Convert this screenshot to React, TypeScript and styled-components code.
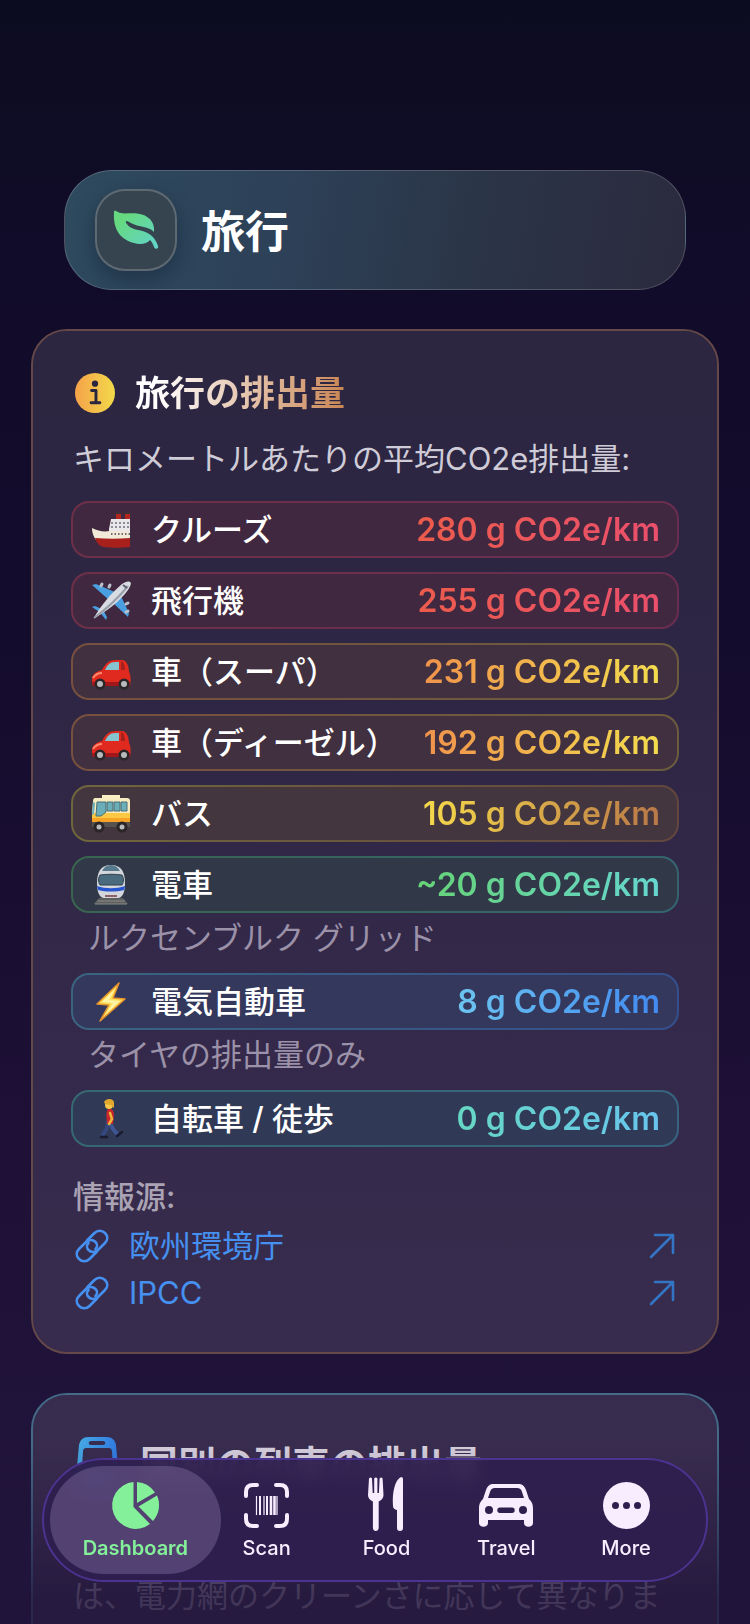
import React from "react";
import styled, {createGlobalStyle, css} from "styled-components";

const GlobalStyle = createGlobalStyle`
    * {
        box-sizing: border-box;
    }

    body {
        margin: 0;
        background: #0c0c20;
        font-family: Inter, "Noto Sans CJK JP", sans-serif;
        color: #fff;
    }
`;

const Screen = styled.div`
    height: 100vh;
    overflow: hidden;
    background: linear-gradient(180deg, #0c0c20 0%, #110c29 15%, #140c2d 40%, #1e1036 70%, #22163c 100%);
`;

const Content = styled.main`
    display: flex;
    flex-direction: column;
    gap: 39px;
    padding: 170px 31px 0;
`;

const Header = styled.header`
    display: flex;
    align-items: center;
    gap: 24px;
    height: 120px;
    margin: 0 33px;
    padding: 0 30px;
    border: 1px solid rgba(255, 255, 255, 0.18);
    border-radius: 48px;
    background: linear-gradient(100deg, #2e4a5e 0%, #2d4158 35%, #2b3548 65%, #2b2a3e 100%);
`;

const HeaderBadge = styled.div`
    display: flex;
    align-items: center;
    justify-content: center;
    width: 82px;
    height: 82px;
    border: 2px solid rgba(255, 255, 255, 0.2);
    border-radius: 30px;
    background: #36444f;
    box-shadow: 0 8px 20px rgba(10, 20, 40, 0.35);
`;

const PageTitle = styled.h1`
    margin: 0;
    padding-top: 4px;
    font-size: 44px;
    line-height: 60px;
    font-weight: 700;
`;

const Card = styled.section<{ $edge: string }>`
    padding: 40px 38px 36px;
    border: 2px solid ${({$edge}) => $edge};
    border-radius: 36px;
    background: rgba(255, 255, 255, 0.11) padding-box;
`;

const CardHead = styled.div<{ $large?: boolean }>`
    display: flex;
    align-items: center;
    gap: ${({$large}) => ($large ? 22 : 20)}px;
    padding: ${({$large}) => ($large ? "2px 6px 0" : "0 4px")};
`;

const CardTitle = styled.h2<{ $large?: boolean }>`
    margin: 0;
    font-size: ${({$large}) => ($large ? 38 : 35)}px;
    line-height: 44px;
    font-weight: 700;
    ${({$large}) => $large ? css`
        color: #d6cfdd;
    ` : css`
        background: linear-gradient(90deg, #fff 10%, #c98554 100%);
        background-clip: text;
        color: transparent;
    `}
`;

const Intro = styled.p`
    margin: 22px 0 20px;
    padding-left: 2px;
    font-size: 31px;
    line-height: 44px;
    color: #cfccd8;
`;

const List = styled.ul`
    display: flex;
    flex-direction: column;
    gap: 14px;
    margin: 0;
    padding: 0;
    list-style: none;
`;

const Row = styled.div<{ $fill: string; $from: string; $to: string }>`
    display: flex;
    align-items: center;
    height: 57px;
    padding: 0 17px 0 18px;
    border: 2px solid transparent;
    border-radius: 18px;
    background: linear-gradient(${({$fill}) => $fill}, ${({$fill}) => $fill}) padding-box,
        linear-gradient(100deg, ${({$from}) => $from}, ${({$to}) => $to}) border-box;
`;

const RowLabel = styled.span`
    flex: 1;
    margin-left: 20px;
    font-size: 31px;
    line-height: 44px;
    font-weight: 500;
    white-space: nowrap;
`;

const RowValue = styled.span<{ $from: string; $to: string }>`
    font-size: 32px;
    line-height: 44px;
    font-weight: 600;
    white-space: nowrap;
    background: linear-gradient(90deg, ${({$from}) => $from}, ${({$to}) => $to});
    background-clip: text;
    color: transparent;
`;

const Note = styled.p`
    margin: 0;
    padding: 3px 17px 0;
    height: 46px;
    font-size: 31px;
    line-height: 44px;
    color: #9b91a8;
`;

const SourcesTitle = styled.h3`
    margin: 25px 0 0;
    padding-left: 2px;
    font-size: 31px;
    line-height: 50px;
    font-weight: 500;
    color: #aaa3b3;
`;

const SourceLink = styled.a`
    display: flex;
    align-items: center;
    gap: 20px;
    height: 47px;
    padding: 0 4px;
    font-size: 31px;
    line-height: 44px;
    color: #4590f0;
    text-decoration: none;

    span {
        flex: 1;
    }
`;

const Paragraph = styled.p`
    margin: 83px 0 0;
    padding-left: 2px;
    font-size: 31px;
    line-height: 44px;
    white-space: nowrap;
    color: #a298ae;
`;

const BottomFade = styled.div`
    position: fixed;
    inset: auto 0 0;
    height: 180px;
    background: linear-gradient(180deg, rgba(32, 20, 58, 0), rgba(32, 20, 58, 0.75) 85%);
`;

const TabBar = styled.nav`
    position: fixed;
    left: 42px;
    right: 42px;
    bottom: 42px;
    display: flex;
    align-items: center;
    height: 124px;
    padding: 0 20px 0 6px;
    border: 2px solid #4b3390;
    border-radius: 62px;
    background: rgba(46, 30, 78, 0.92);
    backdrop-filter: blur(8px);
`;

const Tab = styled.button<{ $active?: boolean }>`
    display: flex;
    flex: ${({$active}) => ($active ? 171 : 120)} 1 0;
    flex-direction: column;
    align-items: center;
    gap: 5px;
    height: 108px;
    margin-right: ${({$active}) => ($active ? -14 : 0)}px;
    padding: 16px 0 0;
    border: none;
    border-radius: 54px;
    background: ${({$active}) => ($active ? "rgba(128, 108, 160, 0.45)" : "none")};
    color: ${({$active}) => ($active ? "#84f09a" : "#f7edff")};
    font-family: inherit;
    font-size: 20px;
    line-height: 28px;
    font-weight: ${({$active}) => ($active ? 600 : 500)};
    cursor: pointer;

    svg {
        overflow: visible;
    }
`;

const LeafIcon = () => (
    <svg width="46" height="40" viewBox="0 0 46 40" fill="none" aria-hidden="true">
        <defs>
            <linearGradient id="leaf" x1="0" y1="0" x2="1" y2="1">
                <stop offset="0.2" stopColor="#66d980" />
                <stop offset="1" stopColor="#62d4cc" />
            </linearGradient>
        </defs>
        <path
            d="M1 2C1 0 3 .5 4 1.500C9 5 16 2.500 24 3.500C36 5 42 12 41 22C36 17 30 17 24 15.500C19 14 16 11.500 14 11C12.500 11 12.500 12.500 13.500 13.500C18 20 25 19.500 31 21.500C38 24 43 29 45 36C46 39 42 40 41 37C40 34 39 32 37 30C34 34 27 35 21 33C6 29 0 18 1 2Z"
            fill="url(#leaf)"
        />
    </svg>
);

const InfoIcon = () => (
    <svg width="40" height="40" viewBox="0 0 41 41" aria-hidden="true">
        <defs>
            <linearGradient id="info" x1="0" y1="0" x2="1" y2="0">
                <stop offset="0" stopColor="#f5a24a" />
                <stop offset="1" stopColor="#f3d94a" />
            </linearGradient>
        </defs>
        <circle cx="20.500" cy="20.500" r="20.500" fill="url(#info)" />
        <circle cx="20.500" cy="11" r="3.200" fill="#2b2640" />
        <path d="M17 18h4.500v12.500M16.500 30.500h9" stroke="#2b2640" strokeWidth="3" strokeLinecap="round" strokeLinejoin="round" fill="none" />
    </svg>
);

const ShipIcon = () => (
    <svg width="40" height="40" viewBox="0 0 40 40" aria-hidden="true">
        <path d="M25 2h5v9h-5zM34 2h5v9h-5z" fill="#b3261e" />
        <path d="M25 2h5v2h-5zM34 2h5v2h-5z" fill="#3a3238" />
        <path d="M20 9h19v16H18v-6z" fill="#e9e7ea" />
        <path d="M20 13h19M20 17h19" stroke="#6f7480" strokeWidth="1.500" strokeDasharray="2 2" />
        <path d="M1 18c6 3 11 4 18 3h20v9H5C2 26 1 22 1 18z" fill="#f2ead9" />
        <path d="M20 24h19" stroke="#4a4350" strokeWidth="1.500" strokeDasharray="1.500 2" />
        <path d="M4 28c12 1 24 1 35 0v9c-8 1-18 1-26 0-5-1-7-4-9-9z" fill="#a8201c" />
    </svg>
);

const PlaneIcon = () => (
    <svg width="40" height="40" viewBox="0 0 40 40" aria-hidden="true">
        <path d="M1 4l4-1 21 9-8 7zM37 36l1-4-9-19-8 8zM1 26l3-1 9 4-3 3zM15 39l1-3-5-9-3 3z" fill="#4a9fe0" />
        <path d="M10 5l1-2M18 6l1-2M35 23l2-1M35 31l2-1" stroke="#b9c2cc" strokeWidth="3" strokeLinecap="round" />
        <path d="M3 37C8 27 20 12 31 3c3-2 6-3 8-2s0 5-2 8C29 20 14 32 3 37z" fill="#d9dbe2" />
        <path d="M3 37C14 29 28 16 37 5" stroke="#999faa" strokeWidth="2" fill="none" />
        <path d="M32 4l4 3" stroke="#5a6270" strokeWidth="2" />
    </svg>
);

const CarIcon = () => (
    <svg width="40" height="40" viewBox="0 0 40 40" aria-hidden="true">
        <path d="M1 27c0-5 5-8 10-9 4-7 7-10 14-10h6c5 0 7 7 7 12 2 3 2 9 1 14H3c-2-1-2-5-2-7z" fill="#e0291f" />
        <path d="M14 18c2-5 5-8 10-8h4v8z" fill="#86c4cf" />
        <path d="M30 9c3 1 4 5 4 9h-4z" fill="#a3221c" />
        <path d="M2 26c2-3 5-5 9-5" stroke="#ff8a6b" strokeWidth="2" fill="none" />
        <path d="M1 30h38v4H2z" fill="#a3161a" />
        <circle cx="9" cy="32" r="5.500" fill="#2a2526" />
        <circle cx="33" cy="32" r="5.500" fill="#2a2526" />
        <circle cx="9" cy="32" r="3" fill="#b8babd" />
        <circle cx="33" cy="32" r="3" fill="#b8babd" />
    </svg>
);

const BusIcon = () => (
    <svg width="40" height="40" viewBox="0 0 40 40" aria-hidden="true">
        <path d="M11 1h18v4H11z" fill="#fbf0c4" />
        <path d="M4 4h32c2 0 3 1 3 3v25H1V19L2 7c0-2 1-3 2-3z" fill="#f7ecc0" />
        <path d="M1 22h38v10H1z" fill="#f7a325" />
        <path d="M1 19h38v5H1z" fill="#fbc844" />
        <path d="M6 8h9v10l-5 4H5zM16 8h6v9h-6zM23 8h6v9h-6zM30 8h6v9h-6z" fill="#69aeb8" stroke="#4b6f78" />
        <path d="M2 8l2 1-1 11-2 1z" fill="#69aeb8" />
        <path d="M1 28h38v5H1z" fill="#565250" />
        <circle cx="8" cy="33" r="5.500" fill="#2a2526" />
        <circle cx="31" cy="33" r="5.500" fill="#2a2526" />
        <circle cx="8" cy="33" r="2.500" fill="#b8babd" />
        <circle cx="31" cy="33" r="2.500" fill="#b8babd" />
    </svg>
);

const TrainIcon = () => (
    <svg width="40" height="40" viewBox="0 0 40 40" aria-hidden="true">
        <path d="M8 33h24l5 6H3z" fill="#5d5f5e" />
        <path d="M6 36h28M4 39h32" stroke="#8b8d89" strokeWidth="1" />
        <path d="M20 0c11 0 14 8 14 18 0 8-2 15-7 15H13C8 33 6 26 6 18 6 8 9 0 20 0z" fill="#d3d6dc" />
        <path d="M11 6c2-4 5-6 9-6s7 2 9 6z" fill="#56798c" />
        <path d="M9 10c7-1 15-1 22 0 2 3 2 7 0 10H9c-2-3-2-7 0-10z" fill="#496b7d" stroke="#33424e" />
        <path d="M6 21c9 3 19 3 28 0l-1 4c-8 2-18 2-26 0z" fill="#2656cf" />
        <path d="M14 31h12" stroke="#8a6268" strokeWidth="2" />
    </svg>
);

const BoltIcon = () => (
    <svg width="40" height="40" viewBox="0 0 40 40" aria-hidden="true">
        <path d="M28 1L6 22l12 1L9 39l25-22-12-1z" fill="#ffdf5c" stroke="#e8942c" strokeWidth="1.500" strokeLinejoin="round" />
        <path d="M24 7L11 20l11 1-8 12 15-14-11-1z" fill="#fff3a6" />
    </svg>
);

const WalkerIcon = () => (
    <svg width="40" height="40" viewBox="0 0 40 40" aria-hidden="true">
        <path d="M17 21l-1 8-5 8" stroke="#35477f" strokeWidth="4" fill="none" />
        <path d="M18 22l4 8 5 6" stroke="#405694" strokeWidth="4" fill="none" />
        <path d="M10 38h6M26 37l5-4" stroke="#1a1b30" strokeWidth="2.500" strokeLinecap="round" />
        <path d="M17 10c4-1 6 2 6 6l-1 9h-6c0-5-2-11 1-15z" fill="#c8262b" />
        <path d="M19 14l2 6-3 5" stroke="#eeb43c" strokeWidth="2.500" fill="none" strokeLinecap="round" />
        <circle cx="18" cy="6" r="4" fill="#f7c84a" />
        <path d="M13 3c2-4 9-4 10 0v6l-3-3-6-1z" fill="#e0a92e" />
    </svg>
);

const LinkIcon = () => (
    <svg width="34" height="34" viewBox="0 0 34 34" fill="none" stroke="currentColor" strokeWidth="2.600" strokeLinecap="round" aria-hidden="true">
        <path d="M12 11.500L19.500 4C22.500 1 27 1 30 4C33 7 33 11 30 14L23 21C20 23.500 16 23.500 13.500 21C11.500 19 11.500 16 13.500 14" />
        <path d="M22 22.500L14.500 30C11.500 33 7 33 4 30C1 27 1 23 4 20L11 13C14 10.500 18 10.500 20.500 13C22.500 15 22.500 18 20.500 20" />
    </svg>
);

const ArrowIcon = () => (
    <svg width="26" height="26" viewBox="0 0 26 26" fill="none" stroke="#3474c4" strokeWidth="2.600" strokeLinecap="round" strokeLinejoin="round" aria-hidden="true">
        <path d="M2 24L24 2M6 2h18v18" />
    </svg>
);

const TramIcon = () => (
    <svg width="41" height="54" viewBox="0 0 41 54" aria-hidden="true">
        <defs>
            <linearGradient id="tram" x1="0" y1="0" x2="1" y2="0">
                <stop offset="0" stopColor="#46aae4" />
                <stop offset="1" stopColor="#317ae0" />
            </linearGradient>
        </defs>
        <path
            fillRule="evenodd"
            d="M11 0h19c5 0 8 3 9 8l2 22v16c0 5-3 8-8 8H8c-5 0-8-3-8-8V30L2 8c1-5 4-8 9-8zM14 4c-3 0-3 4 0 4h12c3 0 3-4 0-4zM10 11c-3 0-4 1-4 4L5 30h31l-1-15c0-3-1-4-4-4z"
            fill="url(#tram)"
        />
    </svg>
);

const PieIcon = () => (
    <svg width="47" height="47" viewBox="0 0 47 47" fill="currentColor" aria-hidden="true">
        <path d="M21.500 0A23.500 23.500 0 1 0 38 42L21.500 25z" />
        <path d="M25 0A23.500 23.500 0 0 1 43 10.500L25 21z" />
        <path d="M45 13.500A23.500 23.500 0 0 1 41 39L26.500 24.500z" />
    </svg>
);

const ScanIcon = () => (
    <svg width="47" height="47" viewBox="0 0 47 47" fill="none" stroke="currentColor" aria-hidden="true">
        <path d="M3 14V10Q3 3 10 3H14M33 3H37Q44 3 44 10V14M44 33V37Q44 44 37 44H33M14 44H10Q3 44 3 37V33" strokeWidth="4" strokeLinecap="round" />
        <path d="M13.500 14v19M21 14v19M34 14v19" strokeWidth="1.200" />
        <path d="M17 14v19M24 14v19" strokeWidth="2" />
        <path d="M28 14v19M31.500 14v19" strokeWidth="2.600" />
    </svg>
);

const FoodIcon = () => (
    <svg width="36" height="47" viewBox="0 0 36 47" fill="currentColor" aria-hidden="true">
        <path d="M1-3.500q1.500-2 3 0L4.700 11h1.500V-3.500q1.600-2 3.200 0V11h1.500l.7-14.500q1.500-2 3 0L15.500 13q0 4-4.800 6.500V46q-.4 3-2.900 3t-2.900-3V19.500Q0 17 0 13z" />
        <path d="M33-5q2 0 2 2v49q0 3-3 3t-3-3V28q-4-1-4-4C24 10 27-2 33-5z" />
    </svg>
);

const TravelIcon = () => (
    <svg width="54" height="47" viewBox="0 0 54 47" fill="currentColor" aria-hidden="true">
        <path
            fillRule="evenodd"
            d="M15 2H39C43 2 45 3 47 8L50 17C53 20 54 22 54 27V41C54 46 45 46 45 41V38H9V41C9 46 0 46 0 41V27C0 22 1 20 4 17L7 8C9 3 11 2 15 2zM16 6C13 6 12 7 11 10L9 16H45L43 10C42 7 41 6 38 6zM10 24a4 4 0 1 0 0 8 4 4 0 0 0 0-8zM44 24a4 4 0 1 0 0 8 4 4 0 0 0 0-8zM21 25.500a2.700 2.700 0 0 0 0 5.400h12a2.700 2.700 0 0 0 0-5.400z"
        />
    </svg>
);

const MoreIcon = () => (
    <svg width="47" height="47" viewBox="0 0 47 47" aria-hidden="true">
        <circle cx="23.500" cy="23.500" r="23.500" fill="currentColor" />
        <circle cx="12.500" cy="23.500" r="3.500" fill="#2e1e4e" />
        <circle cx="23.500" cy="23.500" r="3.500" fill="#2e1e4e" />
        <circle cx="34.500" cy="23.500" r="3.500" fill="#2e1e4e" />
    </svg>
);

interface Tone {
    from: string;
    to: string;
    fill: string;
    edgeFrom: string;
    edgeTo: string;
}

const tones: Record<string, Tone> = {
    red: {from: "#ec5c4c", to: "#ea4f6c", fill: "#402840", edgeFrom: "#6e3048", edgeTo: "#6a2d50"},
    orange: {from: "#f0934c", to: "#f3dc4e", fill: "#413040", edgeFrom: "#78503f", edgeTo: "#6c5c3e"},
    yellow: {from: "#f6da4a", to: "#b97748", fill: "#43363e", edgeFrom: "#70663c", edgeTo: "#62463f"},
    green: {from: "#66d475", to: "#66d6cf", fill: "#313848", edgeFrom: "#39654f", edgeTo: "#34656f"},
    blue: {from: "#6cc4f0", to: "#428af0", fill: "#33385c", edgeFrom: "#3a6480", edgeTo: "#344f8c"},
    teal: {from: "#66d8c4", to: "#68c4ee", fill: "#303a56", edgeFrom: "#356870", edgeTo: "#376480"},
};

interface Emission {
    label: string;
    value: string;
    tone: string;
    icon: React.ReactNode;
    note?: string;
}

const emissions: Emission[] = [
    {label: "クルーズ", value: "280 g CO2e/km", tone: "red", icon: <ShipIcon />},
    {label: "飛行機", value: "255 g CO2e/km", tone: "red", icon: <PlaneIcon />},
    {label: "車（スーパ）", value: "231 g CO2e/km", tone: "orange", icon: <CarIcon />},
    {label: "車（ディーゼル）", value: "192 g CO2e/km", tone: "orange", icon: <CarIcon />},
    {label: "バス", value: "105 g CO2e/km", tone: "yellow", icon: <BusIcon />},
    {label: "電車", value: "~20 g CO2e/km", tone: "green", icon: <TrainIcon />, note: "ルクセンブルク グリッド"},
    {label: "電気自動車", value: "8 g CO2e/km", tone: "blue", icon: <BoltIcon />, note: "タイヤの排出量のみ"},
    {label: "自転車 / 徒歩", value: "0 g CO2e/km", tone: "teal", icon: <WalkerIcon />},
];

const tabs = [
    {label: "Dashboard", icon: <PieIcon />},
    {label: "Scan", icon: <ScanIcon />},
    {label: "Food", icon: <FoodIcon />},
    {label: "Travel", icon: <TravelIcon />},
    {label: "More", icon: <MoreIcon />},
];

const EmissionRow: React.FC<{ item: Emission }> = ({item}) => {
    const tone = tones[item.tone];
    return (
        <li>
            <Row $fill={tone.fill} $from={tone.edgeFrom} $to={tone.edgeTo}>
                {item.icon}
                <RowLabel>{item.label}</RowLabel>
                <RowValue $from={tone.from} $to={tone.to}>{item.value}</RowValue>
            </Row>
            {item.note && <Note>{item.note}</Note>}
        </li>
    );
};

const App: React.FC = () => {
    const [activeTab, setActiveTab] = React.useState("Dashboard");

    return (
        <Screen lang="ja">
            <GlobalStyle />
            <Content>
                <Header>
                    <HeaderBadge><LeafIcon /></HeaderBadge>
                    <PageTitle>旅行</PageTitle>
                </Header>
                <Card $edge="#65494a">
                    <CardHead>
                        <InfoIcon />
                        <CardTitle>旅行の排出量</CardTitle>
                    </CardHead>
                    <Intro>キロメートルあたりの平均CO2e排出量:</Intro>
                    <List>
                        {emissions.map((item) => (
                            <EmissionRow key={item.label} item={item} />
                        ))}
                    </List>
                    <SourcesTitle>情報源:</SourcesTitle>
                    <SourceLink href="#eea">
                        <LinkIcon />
                        <span>欧州環境庁</span>
                        <ArrowIcon />
                    </SourceLink>
                    <SourceLink href="#ipcc">
                        <LinkIcon />
                        <span>IPCC</span>
                        <ArrowIcon />
                    </SourceLink>
                </Card>
                <Card $edge="#456a88">
                    <CardHead $large>
                        <TramIcon />
                        <CardTitle $large>国別の列車の排出量</CardTitle>
                    </CardHead>
                    <Paragraph>は、電力網のクリーンさに応じて異なりま</Paragraph>
                </Card>
            </Content>
            <BottomFade />
            <TabBar>
                {tabs.map((tab) => (
                    <Tab key={tab.label} $active={tab.label === activeTab} onClick={() => setActiveTab(tab.label)}>
                        {tab.icon}
                        {tab.label}
                    </Tab>
                ))}
            </TabBar>
        </Screen>
    );
};

export default App;
